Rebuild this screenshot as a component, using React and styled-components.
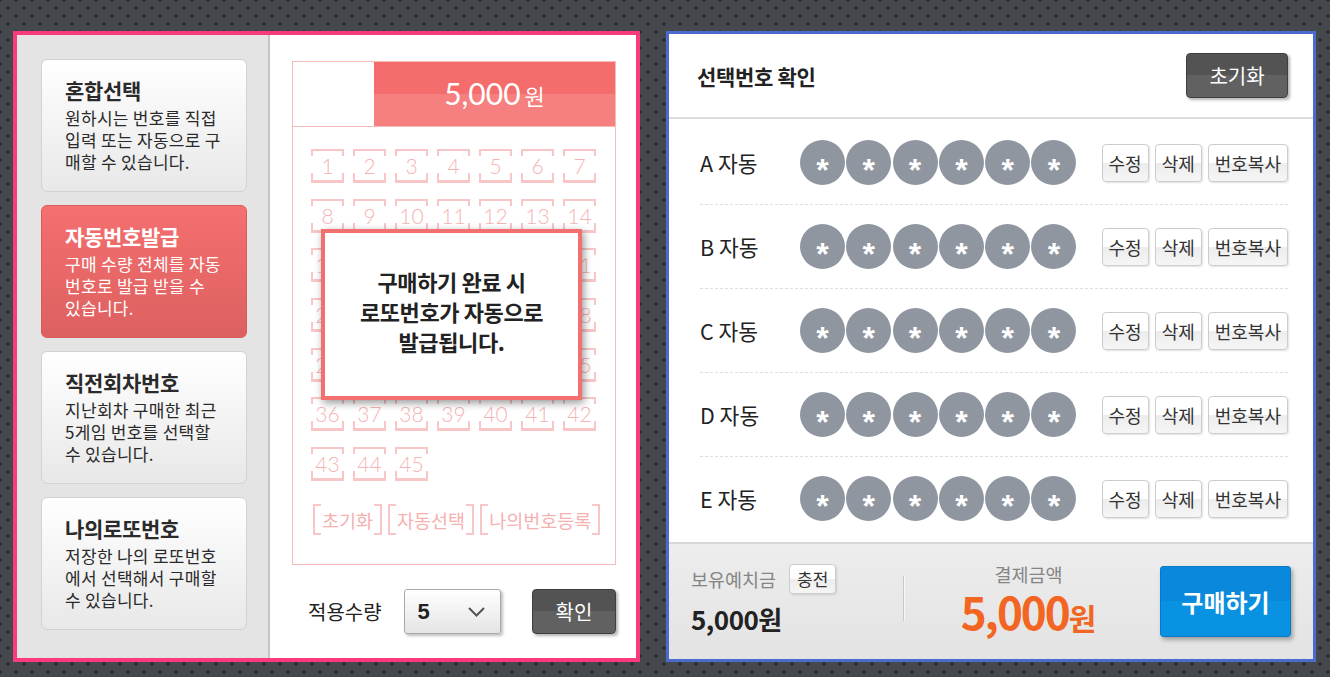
import React from "react";
import styled, { createGlobalStyle } from "styled-components";

const GlobalStyle = createGlobalStyle`
  html, body {
    margin: 0;
    padding: 0;
  }
  body {
    font-family: "Noto Sans CJK KR", "Noto Sans", sans-serif;
    background-color: #45494d;
    background-image:
      radial-gradient(circle, #25282b 1.3px, transparent 1.9px),
      radial-gradient(circle, #25282b 1.3px, transparent 1.9px);
    background-size: 16px 16px;
    background-position: 0 0, 8px 8px;
  }
`;

const Page = styled.div`
  display: flex;
  gap: 26px;
  width: 1330px;
  height: 677px;
  box-sizing: border-box;
  padding: 31px 14px 15px 13px;
`;

/* ---------- left panel ---------- */

const LeftPanel = styled.div`
  display: flex;
  width: 627px;
  height: 631px;
  box-sizing: border-box;
  border: 4px solid #fb3a7c;
  background: #fff;
`;

const Sidebar = styled.div`
  display: flex;
  flex-direction: column;
  gap: 13px;
  width: 253px;
  box-sizing: border-box;
  padding: 24px 0 0 24px;
  background: #e4e4e4;
  border-right: 2px solid #c6c6c6;
`;

const Card = styled.div`
  width: 206px;
  height: 133px;
  box-sizing: border-box;
  padding: 17px 0 0 23px;
  border-radius: 6px;
  border: 1px solid ${({ $active }) => ($active ? "#d95b5b" : "#d2d2d2")};
  background: ${({ $active }) =>
    $active
      ? "linear-gradient(to bottom, #f56f6f, #dd6060)"
      : "linear-gradient(to bottom, #ffffff, #e8e8e8)"};
  color: ${({ $active }) => ($active ? "#fff" : "#2a2a2a")};
`;

const CardTitle = styled.div`
  font-size: 21px;
  font-weight: 700;
  line-height: 26px;
  margin-bottom: 4px;
  letter-spacing: -0.3px;
`;

const CardDesc = styled.div`
  font-size: 17px;
  line-height: 22px;
  letter-spacing: 0.3px;
  white-space: nowrap;
`;

const MainArea = styled.div`
  flex: 1;
  display: flex;
  flex-direction: column;
  padding: 26px 20px 0 22px;
`;

const Ticket = styled.div`
  position: relative;
  width: 324px;
  height: 504px;
  box-sizing: border-box;
  border: 1px solid #f8b9b9;
`;

const TicketHead = styled.div`
  display: flex;
  height: 64px;
  border-bottom: 1px solid #f8b9b9;
`;

const HeadBlank = styled.div`
  width: 81px;
`;

const HeadPrice = styled.div`
  flex: 1;
  display: flex;
  align-items: baseline;
  justify-content: center;
  gap: 4px;
  padding-top: 14px;
  box-sizing: border-box;
  background: linear-gradient(to bottom, #f56c6c 50%, #f68080 50%);
  color: #fff;
  font-family: Lato, "Noto Sans CJK KR", sans-serif;
  font-size: 30px;
  line-height: 34px;
`;

const Won = styled.span`
  font-family: "Noto Sans CJK KR", sans-serif;
  font-size: 22px;
`;

const NumGrid = styled.div`
  display: grid;
  grid-template-columns: repeat(7, 33px);
  grid-auto-rows: 34px;
  column-gap: 9px;
  row-gap: 15.7px;
  padding: 22px 0 0 18px;
`;

const NumBox = styled.div`
  position: relative;
  display: flex;
  align-items: center;
  justify-content: center;
  box-sizing: border-box;
  border: 2px solid #f8c6c6;
  border-bottom-width: 3px;
  color: #f6b3b3;
  font-family: Lato, sans-serif;
  font-weight: 300;
  font-size: 21px;
  line-height: 1;

  &::before {
    content: "";
    position: absolute;
    top: 5px;
    bottom: 7px;
    left: -2px;
    right: -2px;
    border-left: 2px solid #fff;
    border-right: 2px solid #fff;
  }
`;

const BracketRow = styled.div`
  display: flex;
  gap: 6px;
  margin-top: 23px;
  padding-left: 20px;
`;

const BracketBtn = styled.div`
  position: relative;
  height: 31px;
  box-sizing: border-box;
  padding: 0 7px;
  display: flex;
  align-items: center;
  border: 2px solid #f8c6c6;
  color: #f5b0b0;
  font-size: 18.5px;

  &::before {
    content: "";
    position: absolute;
    left: 6px;
    right: 6px;
    top: -2px;
    bottom: -2px;
    border-top: 2px solid #fff;
    border-bottom: 2px solid #fff;
  }
`;

const Popup = styled.div`
  position: absolute;
  left: 28px;
  top: 167px;
  width: 261px;
  height: 171px;
  box-sizing: border-box;
  display: flex;
  align-items: center;
  justify-content: center;
  padding-bottom: 7px;
  text-align: center;
  background: #fff;
  border: 4px solid #f27070;
  box-shadow: 2px 3px 8px rgba(0, 0, 0, 0.4);
  color: #222;
  font-size: 22px;
  font-weight: 700;
  line-height: 30px;
  letter-spacing: -0.4px;
`;

const ControlRow = styled.div`
  display: flex;
  align-items: center;
  width: 324px;
  margin-top: 24px;
  padding-left: 16px;
  box-sizing: border-box;
`;

const ControlLabel = styled.span`
  font-size: 20px;
  color: #222;
`;

const Select = styled.div`
  display: flex;
  align-items: center;
  justify-content: space-between;
  margin-left: 22px;
  width: 97px;
  height: 45px;
  box-sizing: border-box;
  padding: 0 15px 0 13px;
  border: 1px solid #a9a9a9;
  border-radius: 3px;
  background: linear-gradient(to bottom, #ffffff, #e4e4e4);
  box-shadow: 2px 2px 3px rgba(0, 0, 0, 0.25);
  font-family: "Liberation Sans", sans-serif;
  font-weight: 700;
  font-size: 22px;
  color: #222;
`;

const DarkButton = styled.button`
  margin-left: ${({ $push }) => ($push ? "auto" : "0")};
  width: ${({ $w }) => $w}px;
  height: 45px;
  border: 1px solid #3f3f3f;
  border-radius: 4px;
  background: linear-gradient(to bottom, #535353 50%, #616161 50%);
  box-shadow: 2px 2px 3px rgba(0, 0, 0, 0.3);
  color: #fff;
  font-family: "Noto Sans CJK KR", sans-serif;
  font-size: 20px;
  padding: 0;
`;

/* ---------- right panel ---------- */

const RightPanel = styled.div`
  display: flex;
  flex-direction: column;
  width: 650px;
  height: 631px;
  box-sizing: border-box;
  border: 3px solid #4b6ccd;
  background: #fff;
`;

const RightHead = styled.div`
  display: flex;
  align-items: center;
  justify-content: space-between;
  height: 85px;
  box-sizing: border-box;
  padding: 0 25px 0 28px;
  border-bottom: 2px solid #dcdcdc;
`;

const RightTitle = styled.h2`
  margin: 0;
  font-size: 21px;
  font-weight: 700;
  color: #222;
  letter-spacing: -0.3px;
`;

const PickList = styled.div`
  flex: 1;
  padding-top: 2px;
`;

const PickRow = styled.div`
  display: flex;
  align-items: center;
  height: 84px;
  box-sizing: border-box;
  margin: 0 25px 0 31px;
  border-bottom: 1px dashed #dedede;

  &:last-child {
    border-bottom: none;
    height: 83px;
  }
`;

const PickLabel = styled.span`
  width: 100px;
  font-size: 21.5px;
  color: #222;
`;

const Balls = styled.div`
  display: flex;
  gap: 1.3px;
`;

const Ball = styled.div`
  width: 45px;
  height: 45px;
  border-radius: 50%;
  background: #8f96a0;
  display: flex;
  justify-content: center;
  color: #fff;
  font-family: "Liberation Sans", sans-serif;
  font-weight: 700;
  font-size: 32px;
  line-height: 45px;
  padding-top: 8px;
  box-sizing: border-box;
`;

const SmallBtns = styled.div`
  display: flex;
  gap: 6px;
  margin-left: auto;
`;

const SmallBtn = styled.button`
  height: 38px;
  padding: 0 6px;
  border: 1px solid #cccccc;
  border-radius: 4px;
  background: linear-gradient(to bottom, #ffffff 50%, #ececec 50%, #f6f6f6);
  box-shadow: 1px 1px 2px rgba(0, 0, 0, 0.12);
  font-family: "Noto Sans CJK KR", sans-serif;
  font-size: 18px;
  color: #333;
`;

const Footer = styled.div`
  display: flex;
  align-items: center;
  height: 117px;
  box-sizing: border-box;
  padding: 0 22px;
  border-top: 2px solid #d8d8d8;
  background: linear-gradient(to bottom, #ededed, #e3e3e3);
`;

const Balance = styled.div`
  width: 212px;
  display: flex;
  flex-direction: column;
  gap: 10px;
  margin-top: -6px;
`;

const BalanceTop = styled.div`
  display: flex;
  align-items: center;
  gap: 13px;
`;

const GreyLabel = styled.span`
  font-size: 18.5px;
  color: #858585;
`;

const ChargeBtn = styled(SmallBtn)`
  height: 30px;
  padding: 0 7px;
  font-size: 17px;
`;

const BalanceAmount = styled.div`
  font-size: 26px;
  font-weight: 700;
  color: #222;
  letter-spacing: -0.5px;
  line-height: 30px;
`;

const Divider = styled.div`
  width: 1px;
  height: 45px;
  background: #c9c9c9;
  border-right: 1px solid #f7f7f7;
  margin-top: -6px;
`;

const Pay = styled.div`
  flex: 1;
  display: flex;
  flex-direction: column;
  align-items: center;
  padding-right: 8px;
  margin-top: -2px;
`;

const PayAmount = styled.div`
  color: #f26522;
  font-weight: 700;
  font-size: 44px;
  line-height: 48px;
  letter-spacing: -2px;
`;

const PayWon = styled.span`
  font-size: 30px;
  letter-spacing: 0;
`;

const BuyButton = styled.button`
  width: 131px;
  height: 71px;
  border: 1px solid #0879c4;
  border-radius: 3px;
  background: linear-gradient(to bottom, #0a89dc 50%, #0a92e2 50%);
  box-shadow: 2px 3px 4px rgba(0, 0, 0, 0.3);
  color: #fff;
  font-family: "Noto Sans CJK KR", sans-serif;
  font-size: 24px;
  font-weight: 700;
  padding: 0;
`;

const cards = [
  {
    title: "혼합선택",
    lines: ["원하시는 번호를 직접", "입력 또는 자동으로 구", "매할 수 있습니다."],
  },
  {
    title: "자동번호발급",
    lines: ["구매 수량 전체를 자동", "번호로 발급 받을 수", "있습니다."],
    active: true,
  },
  {
    title: "직전회차번호",
    lines: ["지난회차 구매한 최근", "5게임 번호를 선택할", "수 있습니다."],
  },
  {
    title: "나의로또번호",
    lines: ["저장한 나의 로또번호", "에서 선택해서 구매할", "수 있습니다."],
  },
];

const picks = ["A", "B", "C", "D", "E"];

const App = () => (
  <>
    <GlobalStyle />
    <Page>
      <LeftPanel>
        <Sidebar>
          {cards.map((c) => (
            <Card key={c.title} $active={c.active}>
              <CardTitle>{c.title}</CardTitle>
              <CardDesc>
                {c.lines.map((l, i) => (
                  <div key={i}>{l}</div>
                ))}
              </CardDesc>
            </Card>
          ))}
        </Sidebar>

        <MainArea>
          <Ticket>
            <TicketHead>
              <HeadBlank />
              <HeadPrice>
                5,000<Won>원</Won>
              </HeadPrice>
            </TicketHead>
            <NumGrid>
              {Array.from({ length: 45 }, (_, i) => (
                <NumBox key={i}>{i + 1}</NumBox>
              ))}
            </NumGrid>
            <BracketRow>
              <BracketBtn>초기화</BracketBtn>
              <BracketBtn>자동선택</BracketBtn>
              <BracketBtn>나의번호등록</BracketBtn>
            </BracketRow>
            <Popup>
              구매하기 완료 시
              <br />
              로또번호가 자동으로
              <br />
              발급됩니다.
            </Popup>
          </Ticket>
          <ControlRow>
            <ControlLabel>적용수량</ControlLabel>
            <Select>
              5
              <svg width="17" height="10" viewBox="0 0 17 10">
                <polyline points="1,1 8.5,8.5 16,1" fill="none" stroke="#555" strokeWidth="2" />
              </svg>
            </Select>
            <DarkButton $push $w={84}>확인</DarkButton>
          </ControlRow>
        </MainArea>
      </LeftPanel>

      <RightPanel>
        <RightHead>
          <RightTitle>선택번호 확인</RightTitle>
          <DarkButton $w={102}>초기화</DarkButton>
        </RightHead>
        <PickList>
          {picks.map((p) => (
            <PickRow key={p}>
              <PickLabel>{p} 자동</PickLabel>
              <Balls>
                {Array.from({ length: 6 }, (_, i) => (
                  <Ball key={i}>*</Ball>
                ))}
              </Balls>
              <SmallBtns>
                <SmallBtn>수정</SmallBtn>
                <SmallBtn>삭제</SmallBtn>
                <SmallBtn>번호복사</SmallBtn>
              </SmallBtns>
            </PickRow>
          ))}
        </PickList>
        <Footer>
          <Balance>
            <BalanceTop>
              <GreyLabel>보유예치금</GreyLabel>
              <ChargeBtn>충전</ChargeBtn>
            </BalanceTop>
            <BalanceAmount>5,000원</BalanceAmount>
          </Balance>
          <Divider />
          <Pay>
            <GreyLabel>결제금액</GreyLabel>
            <PayAmount>
              5,000<PayWon>원</PayWon>
            </PayAmount>
          </Pay>
          <BuyButton>구매하기</BuyButton>
        </Footer>
      </RightPanel>
    </Page>
  </>
);

export default App;
